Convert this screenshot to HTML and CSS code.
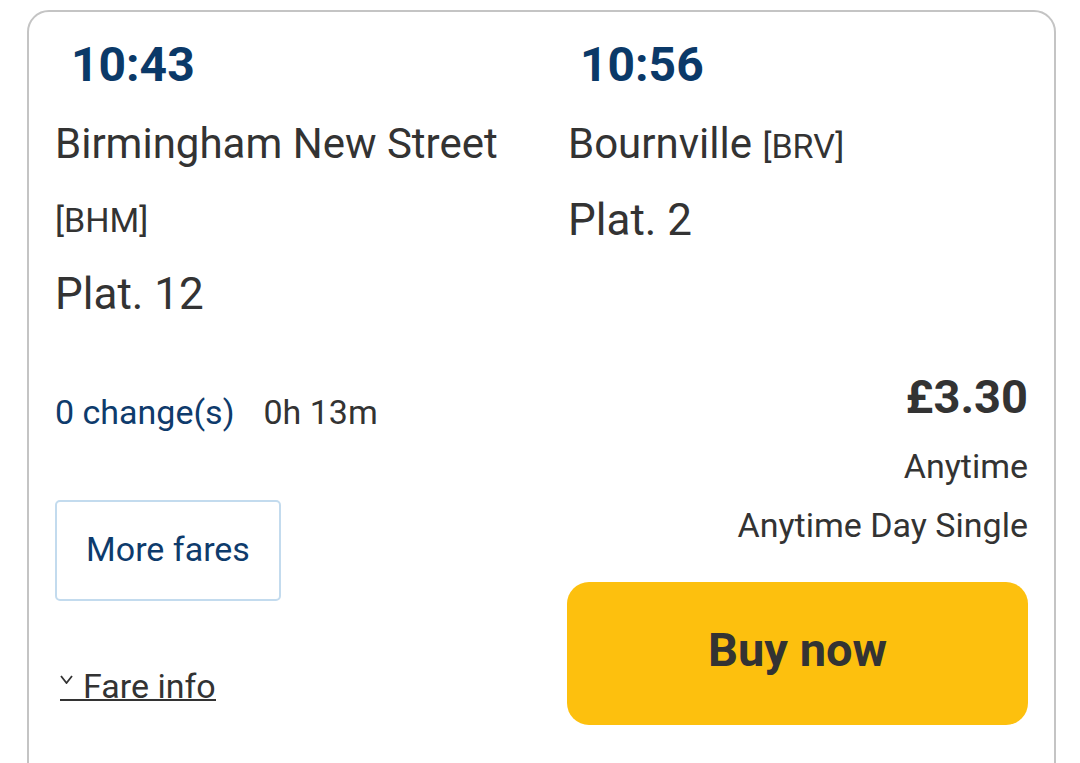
FILE: index.html
```html
<!DOCTYPE html>
<html lang="en">
<head>
<meta charset="utf-8">
<title>Journey result</title>
<link rel="stylesheet" href="styles.css">
</head>
<body>
  <article class="card">
    <section class="journey">
      <div class="stop">
        <div class="time">10:43</div>
        <div class="station">Birmingham New Street <span class="code">[BHM]</span></div>
        <div class="plat">Plat. 12</div>
      </div>
      <div class="stop stop--arrive">
        <div class="time">10:56</div>
        <div class="station">Bournville <span class="code">[BRV]</span></div>
        <div class="plat">Plat. 2</div>
      </div>
    </section>
    <section class="fare">
      <div class="fare-left">
        <div class="summary">
          <span class="changes">0 change(s)</span>
          <span class="duration">0h 13m</span>
        </div>
        <button class="more-fares" type="button">More fares</button>
        <a class="fare-info" href="#">
          <svg class="chev" width="13" height="9" viewBox="0 0 13 9" aria-hidden="true"><path d="M1 1 L6.5 8 L12 1" fill="none" stroke="#333333" stroke-width="1.8" stroke-linejoin="miter"/></svg>
          <span>Fare info</span>
        </a>
      </div>
      <div class="fare-right">
        <div class="price">£3.30</div>
        <div class="ticket">Anytime</div>
        <div class="ticket">Anytime Day Single</div>
        <button class="buy" type="button">Buy now</button>
      </div>
    </section>
  </article>
</body>
</html>
```

FILE: styles.css
```css
* { box-sizing: border-box; }

html, body {
  margin: 0;
  padding: 0;
  background: #ffffff;
  overflow: hidden;
}

body {
  font-family: Roboto, "Noto Sans", "Liberation Sans", sans-serif;
  color: #333333;
  width: 1080px;
  height: 763px;
}

.card {
  margin: 10px 0 0 27px;
  width: 1029px;
  min-height: 800px;
  border: 2px solid #c4c4c4;
  border-radius: 22px;
  padding: 22px 27px 40px 26px;
}

.journey {
  display: grid;
  grid-template-columns: 513px 459px;
}

.time {
  font-size: 48px;
  font-weight: 700;
  line-height: 61px;
  color: #0b3968;
  padding-left: 16px;
}

.stop--arrive .time {
  padding-left: 12px;
}

.station {
  margin-top: 12px;
  font-size: 42px;
  line-height: 74px;
}

.code {
  font-size: 34px;
}

.plat {
  font-size: 44px;
  line-height: 74px;
}

.fare {
  margin-top: 32px;
  display: grid;
  grid-template-columns: 512px 461px;
}

.fare-left {
  display: flex;
  flex-direction: column;
  align-items: flex-start;
}

.summary {
  font-size: 34px;
  line-height: 98px;
  display: flex;
  gap: 29px;
}

.changes {
  color: #0e3b6c;
}

.more-fares {
  margin-top: 39px;
  width: 226px;
  height: 101px;
  padding: 0 0 3px;
  background: #ffffff;
  border: 2px solid #c3dbee;
  border-radius: 5px;
  font-family: inherit;
  font-size: 34px;
  color: #0e3b6c;
}

.fare-info {
  margin-top: 72px;
  margin-left: 5px;
  display: inline-flex;
  align-items: flex-start;
  font-size: 34px;
  line-height: 26px;
  color: #333333;
  text-decoration: none;
  border-bottom: 2px solid #333333;
}

.chev {
  margin: 2px 10px 0 0;
  flex: none;
}

.fare-right {
  display: flex;
  flex-direction: column;
  align-items: flex-end;
}

.price {
  font-size: 47px;
  font-weight: 700;
  line-height: 68px;
}

.ticket {
  font-size: 34px;
  line-height: 59px;
}

.price + .ticket {
  margin-top: 6px;
}

.buy {
  margin-top: 27px;
  width: 100%;
  height: 143px;
  padding: 0 0 8px;
  border: none;
  border-radius: 22px;
  background: #fdc00e;
  font-family: inherit;
  font-size: 47px;
  font-weight: 700;
  color: #333333;
}
```
